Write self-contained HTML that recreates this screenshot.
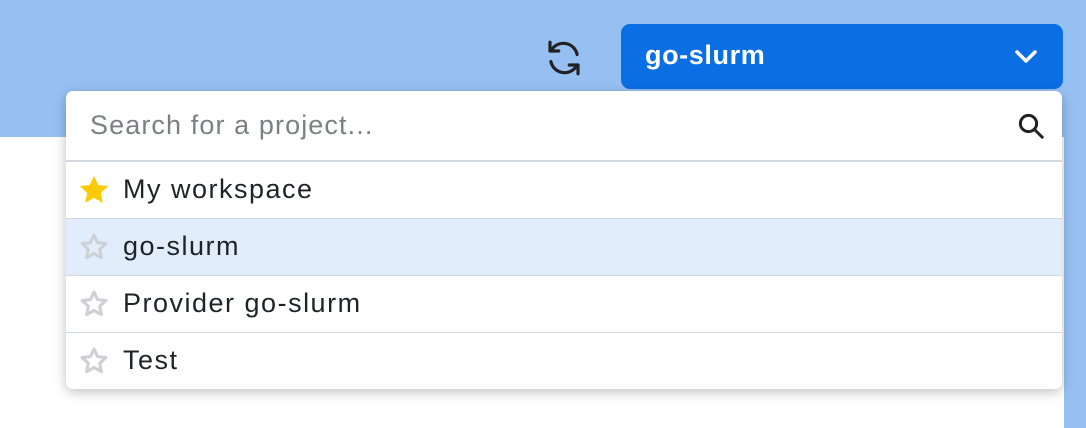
<!DOCTYPE html>
<html><head><style>
body{margin:0;width:1086px;height:428px;overflow:hidden;position:relative;background:#fff;font-family:"Liberation Sans",sans-serif}
.top{position:absolute;left:0;top:0;width:1086px;height:137px;background:#97c0f2}
.right{position:absolute;left:1064px;top:0;width:22px;height:428px;background:#97c0f2}
.btn{position:absolute;left:621px;top:24px;width:442px;height:65px;background:#0a6fe3;border-radius:9px;color:#fff;font-size:27px;font-weight:bold;letter-spacing:.6px}
.btn span{position:absolute;left:24px;top:16px}
.dd{position:absolute;left:66px;top:91px;width:996px;height:298px;background:#fff;border-radius:7px;box-shadow:0 3px 12px rgba(0,0,0,.25);overflow:hidden}
.search{height:69px;border-bottom:2px solid #d3d8de;position:relative}
.search span{position:absolute;left:24px;top:19px;font-size:27px;letter-spacing:1.1px;color:#7c7f83}
.row{height:56px;border-bottom:1px solid #d3d8de;position:relative;font-size:27px;letter-spacing:1.5px;color:#1f2328}
.row:last-child{border-bottom:none}
.row.hl{background:#e1edfa}
.row span{position:absolute;left:57px;top:12px}
.row svg{position:absolute;left:11px;top:11px}
</style></head><body>
<div class="top"></div><div class="right"></div>
<svg style="position:absolute;left:543px;top:37px" width="42" height="42" viewBox="0 0 24 24" fill="none" stroke="#222" stroke-width="1.8" stroke-linecap="round" stroke-linejoin="round"><path d="M19.5 10A8 8 0 0 0 5.5 6.5L4 8"/><path d="M4 3v5h5"/><path d="M4.5 14A8 8 0 0 0 18.5 17.5L20 16"/><path d="M20 21v-5h-5"/></svg>
<div class="btn"><span>go-slurm</span>
<svg style="position:absolute;left:393px;top:24px" width="24" height="18" viewBox="0 0 24 18"><path d="M3 4l9 9 9-9" fill="none" stroke="#fff" stroke-width="3.5" stroke-linecap="round" stroke-linejoin="round"/></svg></div>
<div class="dd">
<div class="search"><span>Search for a project...</span>
<svg style="position:absolute;left:950px;top:20px" width="30" height="30" viewBox="0 0 24 24" fill="none" stroke="#222" stroke-width="2.4" stroke-linecap="round"><circle cx="10" cy="10" r="6.5"/><path d="M15 15l6 6"/></svg></div>
<div class="row"><svg width="34" height="34" viewBox="0 0 24 24"><path d="M12 2l3 6.5 7 .8-5.2 4.8 1.4 7L12 17.6 5.8 21.1l1.4-7L2 9.3l7-.8z" fill="#fccb05"/></svg><span>My workspace</span></div>
<div class="row hl"><svg width="34" height="34" viewBox="0 0 24 24"><path d="M12 3.5l2.5 5.4 5.9.7-4.4 4 1.2 5.9L12 16.6l-5.2 2.9 1.2-5.9-4.4-4 5.9-.7z" fill="none" stroke="#cdd1d6" stroke-width="2.2" stroke-linejoin="round"/></svg><span>go-slurm</span></div>
<div class="row"><svg width="34" height="34" viewBox="0 0 24 24"><path d="M12 3.5l2.5 5.4 5.9.7-4.4 4 1.2 5.9L12 16.6l-5.2 2.9 1.2-5.9-4.4-4 5.9-.7z" fill="none" stroke="#cdd1d6" stroke-width="2.2" stroke-linejoin="round"/></svg><span>Provider go-slurm</span></div>
<div class="row"><svg width="34" height="34" viewBox="0 0 24 24"><path d="M12 3.5l2.5 5.4 5.9.7-4.4 4 1.2 5.9L12 16.6l-5.2 2.9 1.2-5.9-4.4-4 5.9-.7z" fill="none" stroke="#cdd1d6" stroke-width="2.2" stroke-linejoin="round"/></svg><span>Test</span></div>
</div>
</body></html>
